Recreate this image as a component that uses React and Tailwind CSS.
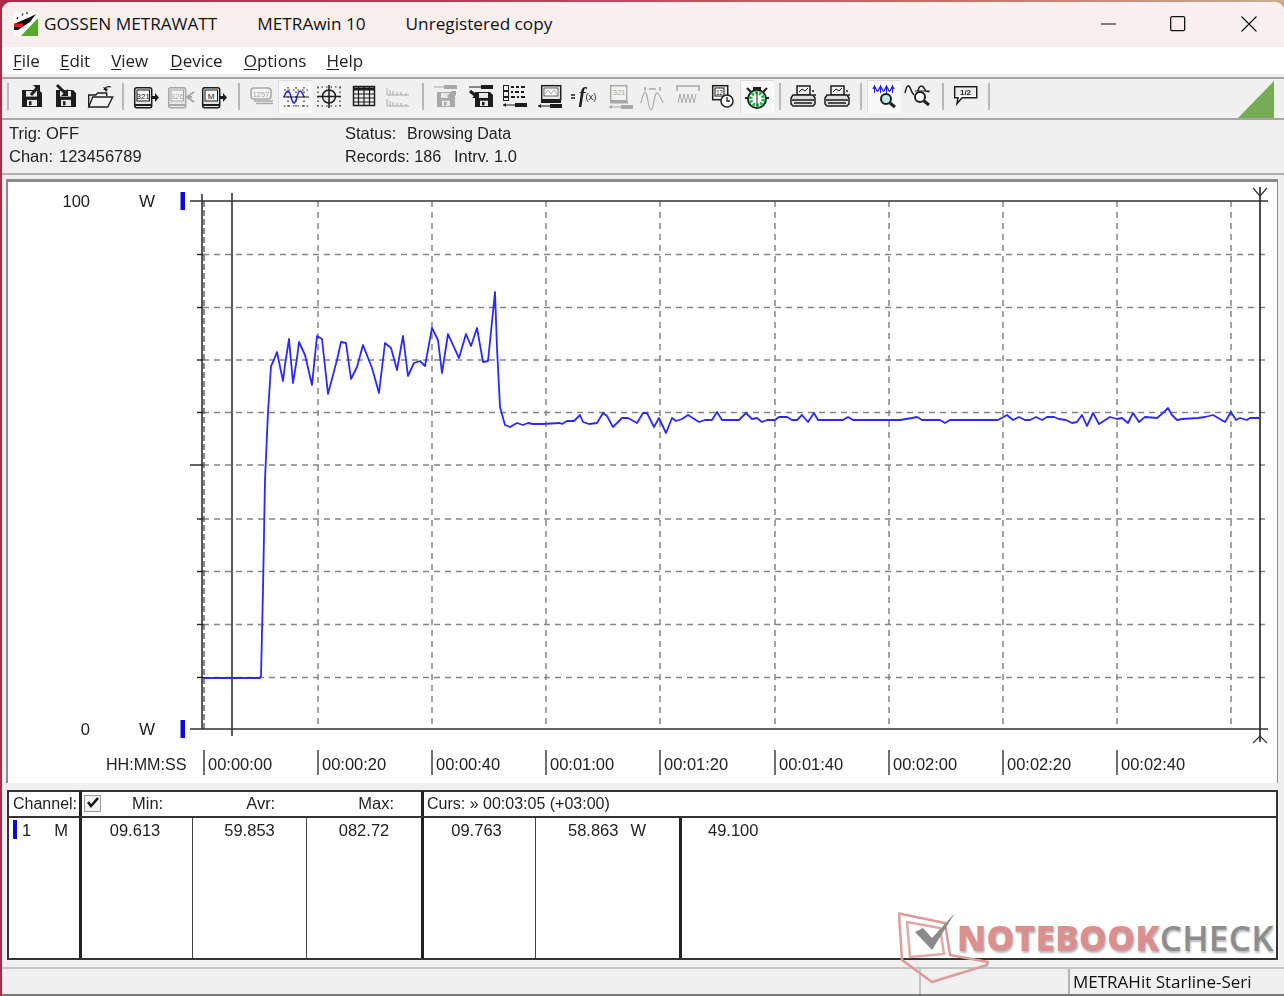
import React from "react";

const K = "#1d1d1d";
const G = "#a8a8a8";
const B = "#1f1fe8";

const Floppy = ({ x, y, w = 20, h = 17, c = K }) => (
  <g>
    <path d={`M${x} ${y}h${w - 3}l3 3v${h - 3}h-${w}z`} fill={c} />
    <rect x={x + 4} y={y + 1} width={w - 9} height={h * 0.33} fill="#e8e8e8" />
    <rect x={x + 5} y={y + h * 0.58} width={w - 10} height={h * 0.42 - 1} fill="#e8e8e8" />
    <rect x={x + 7} y={y + h * 0.66} width={2.5} height={h * 0.3 - 1} fill={c} />
  </g>
);

const Meter = ({ c = K, label = "321", arrow = true, x = 3, gray = false }) => (
  <g>
    <rect x={x + 0.7} y="6.700" width="17" height="20" rx="2" fill="#e6e6e6" stroke={c} strokeWidth="1.500" />
    <rect x={x + 3} y="9" width="12.500" height="11" fill="#f4f4f4" stroke={c} strokeWidth="1" />
    <text x={x + 9.2} y="18" fontSize="8" textAnchor="middle" fontFamily="Liberation Sans, sans-serif" fill={c}>{label}</text>
    <path d={`M${x + 1} 24h16`} stroke={c} strokeWidth="2" />
    {arrow && <path d={`M${x + 18} 15h3v-3l4 4.500-4 4.500v-3h-3z`} fill={c} />}
    {gray && <path d={`M${x + 26} 11l-7 5 7 5M${x + 20} 16h4`} stroke={c} strokeWidth="2" fill="none" />}
  </g>
);

const Probe = ({ y = 26, c = K, x = 3 }) => (
  <g>
    <path d={`M${x} ${y}h21`} stroke={c} strokeWidth="1" />
    <path d={`M${x} ${y}l3 -2v4z`} fill={c} />
    <rect x={x + 12} y={y - 2} width="12" height="4" fill={c} />
  </g>
);

const Lens = ({ x, y, fill = "#fff" }) => (
  <g>
    <circle cx={x} cy={y} r="5" fill={fill} stroke={K} strokeWidth="2" />
    <path d={`M${x + 4} ${y + 4}l5 4`} stroke={K} strokeWidth="3" />
  </g>
);

const Printer = () => (
  <g>
    <path d="M9 5h13v9H9z" fill="#eee" stroke={K} strokeWidth="1.500" />
    <path d="M11 11l3-3 3 2 3-3" fill="none" stroke={K} strokeWidth="1" />
    <path d="M5 14h20l2 3v6l-2 2H5l-2-2v-6z" fill="#ddd" stroke={K} strokeWidth="1.500" />
    <path d="M4 19h22M6 22h18" stroke={K} strokeWidth="1.300" />
    <circle cx="25" cy="10" r="1" fill={K} />
    <circle cx="27" cy="14" r="1" fill={K} />
  </g>
);

const icons = [
  <g key="a"><Floppy x={6} y={9} /><path d="M15 14l7-8" stroke={K} strokeWidth="3" /><path d="M17 4h7v7z" fill={K} /></g>,
  <g key="b"><Floppy x={6} y={9} /><path d="M7 4l8 8" stroke={K} strokeWidth="3" /><path d="M18 8v7h-7z" fill={K} /></g>,
  <g key="c"><path d="M4.700 26V14h7l2-2h9v3" fill="#eee" stroke={K} strokeWidth="1.400" /><path d="M4.700 26l4-10h20l-5 10z" fill="#f4f4f4" stroke={K} strokeWidth="1.400" /><path d="M20 9c1-3 4-4 7-3" fill="none" stroke={K} strokeWidth="1.300" /><path d="M19 6l3 5 2-3z" fill={K} /></g>,
  <Meter key="d" />,
  <Meter key="e" c={G} label="326" arrow={false} gray />,
  <Meter key="f" label="M" />,
  <g key="g"><rect x="5" y="7" width="20" height="11" rx="3" fill="#f2f2f2" stroke={G} strokeWidth="1.500" /><path d="M8 20h19M10 22.500h17" stroke={G} strokeWidth="1.500" /><text x="15" y="15.500" fontSize="7.500" textAnchor="middle" fontFamily="Liberation Sans, sans-serif" fill={G}>1257</text></g>,
  <g key="h"><path d="M3 8h24M3 24h24M7 5v22M15 5v22M23 5v22" stroke={K} strokeWidth="1.200" strokeDasharray="1.500 3" /><path d="M3 15c3-8 5-8 7 0s4 8 6 0 4-8 7 0" fill="none" stroke={B} strokeWidth="1.500" /><path d="M2 15h26" stroke={K} strokeWidth="1" /></g>,
  <g key="i"><path d="M3 6h24M3 25h24M4 6v19M26 6v19" stroke={K} strokeWidth="1.200" strokeDasharray="1.500 3" /><circle cx="15" cy="15.500" r="6.500" fill="none" stroke={K} strokeWidth="1.500" /><path d="M15 4v23M3 15.500h24" stroke={K} strokeWidth="1.500" /></g>,
  <g key="j"><rect x="5.500" y="5.500" width="21" height="19" fill="#eee" stroke={K} strokeWidth="1.500" /><path d="M5 8h22" stroke={K} strokeWidth="3" /><path d="M10.500 5v20M16 5v20M21.500 5v20M5 13h22M5 17h22M5 21h22" stroke={K} strokeWidth="1.200" /></g>,
  <g key="k"><path d="M5 7v7M8 9v5M11 10v4M15 11v3M19 11v3M24 12v2M5 18v7M8 20v5M11 21v4M15 22v3M19 22v3M24 23v2M5 14h22M5 25h22" stroke={G} strokeWidth="1" /></g>,
  <g key="l"><Floppy x={6} y={11} c={G} w={18} h={15} /><path d="M3 6h10" stroke={G} strokeWidth="1" /><rect x="13" y="4" width="13" height="4" fill={G} /><path d="M17 16l6-5" stroke={G} strokeWidth="3" /><path d="M20 10h5v5z" fill={G} /></g>,
  <g key="m"><Floppy x={9} y={11} w={18} h={15} /><path d="M3 6h12" stroke={K} strokeWidth="1" /><rect x="15" y="4" width="12" height="4" fill={K} /><path d="M4 10l6 5" stroke={K} strokeWidth="3" /><path d="M12 11v6H6z" fill={K} /></g>,
  <g key="n"><rect x="3.500" y="4.500" width="5" height="5" fill="#eee" stroke={K} /><rect x="3.500" y="10.500" width="5" height="5" fill="#eee" stroke={K} /><rect x="3.500" y="16.500" width="5" height="3" fill="#eee" stroke={K} /><path d="M11 6h3M16 6h3M21 6h4M11 11h2M15 11h4M21 11h3M11 16h4M17 16h2M21 16h4" stroke={K} strokeWidth="1.800" /><Probe y={24} /></g>,
  <g key="o"><rect x="6.700" y="4.700" width="19" height="14" fill="#eee" stroke={K} strokeWidth="1.500" /><rect x="9" y="7" width="14" height="8" fill="#fff" stroke={K} strokeWidth=".700" /><path d="M10 13l3-4 3 4 3-4 3 4" fill="none" stroke={G} /><rect x="6" y="19" width="20" height="3" fill={K} /><Probe y={25} /></g>,
  <g key="p"><text x="13" y="21" fontSize="20" textAnchor="middle" fontStyle="italic" fontWeight="700" fontFamily="Liberation Serif, serif" fill={K}>f</text><path d="M2 14h4M2 17h4" stroke={K} strokeWidth="1.500" /><text x="22" y="19" fontSize="9.500" textAnchor="middle" fontFamily="Liberation Sans, sans-serif" fill={K}>(x)</text></g>,
  <g key="q"><rect x="6.700" y="4.700" width="16" height="15" fill="#f2f2f2" stroke={G} strokeWidth="1.500" /><text x="15" y="14" fontSize="7.500" textAnchor="middle" fontFamily="Liberation Sans, sans-serif" fill={G}>321</text><rect x="6" y="20" width="18" height="2.500" fill={G} /><Probe y={26} c={G} x={5} /></g>,
  <g key="r"><path d="M7 6v4M22 6v4M11 8h7" stroke={G} strokeWidth="1.500" /><path d="M3 22c3-14 5-14 7-2s4 12 6 0 4-10 9 2" fill="none" stroke={G} strokeWidth="1.200" /></g>,
  <g key="s"><path d="M4 10V5h22v5" fill="none" stroke={G} strokeWidth="1.500" /><path d="M5 22l2-9 2 9 2-9 2 9 2-9 2 9 2-9 2 9 2-9" fill="none" stroke={G} strokeWidth="1" /></g>,
  <g key="t"><rect x="5.700" y="4.700" width="15" height="14" fill="#eee" stroke={K} strokeWidth="1.500" /><rect x="8" y="7" width="9" height="8" fill="#fff" stroke={K} /><text x="12.500" y="14" fontSize="6.500" textAnchor="middle" fontFamily="Liberation Sans, sans-serif" fill={K}>12</text><circle cx="20" cy="20" r="6" fill="#fff" stroke={K} strokeWidth="1.500" /><path d="M20 16v4h3" stroke={K} strokeWidth="1.300" fill="none" /></g>,
  <g key="u"><path d="M5 6l6 6M25 6l-6 6M3 16h5M22 16h5" stroke={K} strokeWidth="2" /><path d="M11 5h8v5h-8z" fill={K} /><circle cx="15" cy="17" r="9" fill="#fff" stroke={K} strokeWidth="2" /><circle cx="15" cy="17" r="6.500" fill="none" stroke="#27b84a" strokeWidth="4" strokeDasharray="2.500 1.500" /><path d="M15 10v14" stroke={K} strokeWidth="1" /></g>,
  <Printer key="v" />,
  <Printer key="w" />,
  <g key="x"><path d="M3 7c1-3 2-3 3 0s2 3 3 0 2-3 3 0 2 3 3 0 2-3 3 0 2 3 3 0 2-3 3 0" fill="none" stroke={B} strokeWidth="1.300" /><path d="M4.500 3v8M10.500 3v8M16.500 3v8M22.500 3v8" stroke={B} strokeWidth="1" /><Lens x={16} y={17} fill="#bfe8ee" /></g>,
  <g key="y"><path d="M2 12c2-9 4-9 6-3 1 3 2 4 3 5" fill="none" stroke={K} strokeWidth="1.500" /><path d="M15 10c1-6 4-6 6-3s1 4 5 4" fill="none" stroke={K} strokeWidth="1.500" /><path d="M12 10h15" stroke={K} /><Lens x={17} y={16} /></g>,
  <g key="z"><path d="M4.700 5.700h22v11H12l-5 6 1-6H4.700z" fill="#fff" stroke={K} strokeWidth="1.500" /><rect x="6" y="7" width="19" height="8" fill="#eee" /><text x="15.500" y="14" fontSize="8" fontWeight="700" textAnchor="middle" fontFamily="Liberation Sans, sans-serif" fill={K}>1/2</text></g>,
];

const Sep = ({ className = "" }) => <div className={`w-[2px] h-[27px] bg-[#b9b9b9] shrink-0 ${className}`} />;

const Tool = ({ i, pressed, wide }) => (
  <div className={`${wide ? "w-[34.500px]" : "w-[34px]"} h-[33px] shrink-0 flex items-center justify-center ${pressed ? "bg-[#f8f8f8] border-t border-l border-[#dcdcdc]" : ""}`}>
    <svg width="30" height="30" viewBox="0 0 30 30">{icons[i]}</svg>
  </div>
);

const Mnemonic = ({ first, rest, className }) => (
  <span className={className}><span className="underline underline-offset-2">{first}</span>{rest}</span>
);

const seg = [
  [203,678],[260,678],[261,676],[263,590],[265,480],[268,412],[270,382],[271,366],[273,362],[277,352],[283,381],[285,365],[289,339],[293,383],[297,358],[299,342],[305,355],[312,385],[317,336],[322,339],[328,394],[337,360],[341,342],[346,343],[351,379],[357,367],[363,345],[372,368],[379,393],[385,343],[391,348],[397,370],[403,336],[408,376],[414,363],[420,361],[425,366],[432,328],[438,340],[442,373],[448,334],[459,358],[466,334],[471,346],[477,328],[483,362],[488,361],[494,302],[495,292],[497,348],[499,387],[500,407],[505,425],[510,427],[517,423],[523,425],[528,423],[533,424],[542,424],[560,423],[562,424],[567,421],[574,421],[580,415],[583,422],[589,424],[597,423],[603,413],[607,416],[613,427],[622,418],[628,418],[637,423],[643,413],[647,413],[654,427],[659,418],[666,433],[672,418],[676,421],[682,419],[688,415],[699,422],[705,420],[712,420],[717,412],[722,420],[739,420],[746,413],[752,419],[757,418],[762,422],[767,420],[775,420],[779,417],[787,417],[792,420],[797,420],[802,415],[808,422],[814,413],[818,420],[843,420],[848,417],[853,420],[900,420],[912,418],[917,417],[922,420],[940,420],[945,423],[950,420],[998,420],[1007,415],[1013,420],[1019,417],[1025,420],[1030,420],[1036,417],[1042,420],[1047,417],[1054,417],[1059,419],[1066,420],[1072,423],[1077,422],[1082,415],[1087,426],[1093,413],[1099,424],[1110,417],[1117,419],[1122,418],[1128,423],[1133,413],[1139,422],[1145,417],[1157,418],[1163,413],[1168,408],[1172,415],[1177,420],[1182,419],[1198,418],[1205,417],[1213,415],[1225,422],[1231,412],[1236,420],[1240,418],[1247,420],[1250,418],[1260,418],
];

const hLines = [254.5, 307.5, 360, 412.5, 465, 519, 571.5, 624.5, 677.5];
const vLines = [318, 432, 546, 660, 775, 889, 1003, 1117, 1231];
const times = ["00:00:00","00:00:20","00:00:40","00:01:00","00:01:20","00:01:40","00:02:00","00:02:20","00:02:40"];
const labelFont = "Liberation Sans, Arial, sans-serif";

const Chart = () => (
  <svg className="block w-full h-full" viewBox="8 182 1269 601" fontFamily={labelFont} fontSize="16.500" fill="#222">
    {hLines.map((y) => <path key={y} d={`M203 ${y}H1268`} stroke="#858585" strokeWidth="1.500" strokeDasharray="6 5" />)}
    {hLines.map((y) => <path key={"t" + y} d={`M${y === 465 ? 190 : 197} ${y}H203`} stroke="#222" strokeWidth="1.400" />)}
    {vLines.map((x) => <path key={x} d={`M${x} 201V729`} stroke="#858585" strokeWidth="1.500" strokeDasharray="6 5" />)}
    <path d="M204 201V729" stroke="#555" strokeWidth="1.400" strokeDasharray="6 3" />
    <path d="M202 194V729" stroke="#222" strokeWidth="1.500" />
    <path d="M190 201H1268M190 729H1268" stroke="#333" strokeWidth="1.500" />
    <path d="M232 193V736" stroke="#333" strokeWidth="1.600" />
    <path d="M1260 187V742" stroke="#222" strokeWidth="1.600" />
    <path d="M1253 188L1260 196L1267 188M1253 743L1260 736L1267 743" fill="none" stroke="#333" strokeWidth="1.200" />
    <rect x="180.500" y="192" width="4.500" height="18" fill="#0a0adf" />
    <rect x="180.500" y="720" width="4.500" height="18" fill="#0a0adf" />
    <polyline points={seg.map((p) => p.join(",")).join(" ")} fill="none" stroke="#2a2aff" strokeWidth="1.800" strokeLinejoin="round" />
    <text x="90" y="207" textAnchor="end">100</text>
    <text x="139" y="207" fontSize="17">W</text>
    <text x="90" y="735" textAnchor="end">0</text>
    <text x="139" y="735" fontSize="17">W</text>
    <text x="106" y="770" fontSize="16.100">HH:MM:SS</text>
    {times.map((t, i) => (
      <g key={t}>
        <path d={`M${[204, 318, 432, 546, 660, 775, 889, 1003, 1117][i]} 750V775`} stroke="#333" strokeWidth="1.400" />
        <text x={[208, 322, 436, 550, 664, 779, 893, 1007, 1121][i]} y="770">{t}</text>
      </g>
    ))}
  </svg>
);

const Val = ({ w, children, border = "border-r border-[#444]", className = "" }) => (
  <div className={`${w} shrink-0 ${border} h-full text-center ${className}`}>{children}</div>
);

export default function App() {
  return (
    <div className="relative w-[1284px] h-[996px] overflow-hidden pl-[2px] pt-[2px] bg-[linear-gradient(90deg,#ad2b49,#b83a5a_35%,#c06a66_70%,#c8ae92)] font-['Liberation_Sans',Arial,sans-serif] text-[16.5px] text-[#222]">
      <div className="flex flex-col w-[1282px] h-[994px] bg-[#f0f0f0] rounded-t-[9px] overflow-hidden">
        <div className="h-[45px] shrink-0 bg-[#f8efee] flex items-center pl-[12px] pb-[1px] font-['Open_Sans',sans-serif] text-[17.200px] text-[#111]">
          <svg width="24" height="24" viewBox="0 0 24 24" className="shrink-0">
            <rect width="24" height="24" fill="#fff" />
            <path d="M24 6L7 24H24z" fill="#55aa2e" />
            <path d="M0 12L16 5l6-3-6 8L4 18H0z" fill="#111" />
            <rect x="0" y="11.500" width="9" height="3.500" fill="#e01a1a" />
            <path d="M3 7l1-2M8 3.500l1-2M13 2v-2" stroke="#111" strokeWidth="1.200" />
          </svg>
          <span className="ml-[6px]">GOSSEN METRAWATT</span>
          <span className="ml-[40px]">METRAwin 10</span>
          <span className="ml-[40px]">Unregistered copy</span>
          <div className="ml-auto flex items-center">
            <svg width="16" height="16" viewBox="0 0 16 16" className="mr-[53px]"><path d="M0 8h15" stroke="#111" strokeWidth="1" /></svg>
            <svg width="16" height="16" viewBox="0 0 16 16" className="mr-[55px]"><rect x=".700" y=".700" width="14" height="14" rx="1.500" fill="none" stroke="#111" strokeWidth="1.300" /></svg>
            <svg width="16" height="16" viewBox="0 0 16 16" className="mr-[27px]"><path d="M.5 .5l15 15M15.500 .5l-15 15" stroke="#111" strokeWidth="1.100" /></svg>
          </div>
        </div>

        <div className="h-[27px] shrink-0 bg-white flex items-center pl-[11px] font-['Open_Sans',sans-serif] text-[17px] text-[#222] blur-[0.3px]">
          <Mnemonic first="F" rest="ile" />
          <Mnemonic first="E" rest="dit" className="ml-[20px]" />
          <Mnemonic first="V" rest="iew" className="ml-[21px]" />
          <Mnemonic first="D" rest="evice" className="ml-[22px]" />
          <Mnemonic first="O" rest="ptions" className="ml-[21px]" />
          <Mnemonic first="H" rest="elp" className="ml-[20px]" />
        </div>

        <div className="h-[43px] shrink-0 mt-[3px] border-t-2 border-b-2 border-[#a6a6a6] flex items-center pl-[5px] pr-[10px] pb-[5px] blur-[0.3px]">
          <Sep className="mr-[5px]" />
          {[0, 1, 2].map((i) => <Tool key={i} i={i} />)}
          <Sep className="ml-[6px] mr-[5px]" />
          {[3, 4, 5].map((i) => <Tool key={i} i={i} />)}
          <Sep className="ml-[7px] mr-[4px]" />
          {[6, 7, 8, 9, 10].map((i) => <Tool key={i} i={i} pressed={i === 7} />)}
          <Sep className="ml-[8px] mr-[5px]" />
          {[11, 12, 13, 14, 15, 16, 17, 18, 19, 20].map((i) => <Tool key={i} i={i} pressed={i === 20} wide />)}
          <Sep className="mx-[5px]" />
          {[21, 22].map((i) => <Tool key={i} i={i} />)}
          <Sep className="ml-[6px] mr-[5px]" />
          {[23, 24].map((i) => <Tool key={i} i={i} pressed={i === 23} />)}
          <Sep className="ml-[7px] mr-[4px]" />
          <Tool i={25} />
          <Sep className="ml-[6px]" />
          <svg width="36" height="37" viewBox="0 0 36 37" className="ml-auto shrink-0 -mb-[5px] self-end"><path d="M36 0V37H0z" fill="#76ac55" /></svg>
        </div>

        <div className="h-[55px] shrink-0 border-b-2 border-[#b0b0b0] grid grid-cols-[336px_1fr] pl-[7px] pt-[2px] leading-[23px] blur-[0.3px]">
          <div>
            <div>Trig: OFF</div>
            <div className="flex"><span className="w-[50px]">Chan:</span><span>123456789</span></div>
          </div>
          <div>
            <div className="flex"><span className="w-[62px]">Status:</span><span className="text-[16px]">Browsing Data</span></div>
            <div className="flex"><span className="w-[109px] text-[16.200px]">Records: 186</span><span>Intrv. 1.0</span></div>
          </div>
        </div>

        <div className="h-[604px] mt-[4px] shrink-0 ml-[4px] w-[1272px] border-t-[3px] border-l-2 border-r border-[#8c8c8c] bg-white blur-[0.25px]">
          <Chart />
        </div>

        <div className="h-[170px] mt-[7px] shrink-0 ml-[5px] w-[1271px] border-2 border-[#333] bg-white flex flex-col blur-[0.25px]">
          <div className="h-[26px] shrink-0 border-b-2 border-[#333] flex items-center leading-none pb-[1px]">
            <div className="w-[73px] shrink-0 h-[25px] border-r-[3px] border-[#222] pl-[4px] flex items-center text-[16px]">Channel:</div>
            <div className="w-[342px] shrink-0 h-[25px] border-r-[3px] border-[#222] relative flex items-center">
              <svg width="18" height="18" viewBox="0 0 18 18" className="ml-[2px] shrink-0">
                <rect x=".5" y=".5" width="16" height="16" fill="#f4f4f4" stroke="#999" />
                <path d="M4 7l3 4 7-8" fill="none" stroke="#111" strokeWidth="2.500" />
              </svg>
              <span className="ml-[30px]">Min:</span>
              <span className="ml-[83px]">Avr:</span>
              <span className="ml-[83px]">Max:</span>
            </div>
            <div className="pl-[3px] flex items-center h-full text-[16px]">Curs: » 00:03:05 (+03:00)</div>
          </div>
          <div className="flex-1 flex leading-[24px]">
            <div className="w-[73px] shrink-0 h-full border-r-[3px] border-[#222] flex items-start">
              <span className="ml-[4px] mt-[2px] w-[4px] h-[19px] bg-[#0a0adf]" />
              <span className="ml-[5px]">1</span>
              <span className="ml-[23px]">M</span>
            </div>
            <Val w="w-[111px]" className="pr-[4px]">09.613</Val>
            <Val w="w-[114px]">59.853</Val>
            <Val w="w-[117px]" border="border-r-[3px] border-[#222]">082.72</Val>
            <Val w="w-[112px]" className="pr-[6px]">09.763</Val>
            <div className="w-[146px] shrink-0 h-full border-r-[3px] border-[#222] pl-[32px]"><span>58.863</span><span className="ml-[12px]">W</span></div>
            <div className="pl-[26px]">49.100</div>
          </div>
        </div>

        <div className="mt-[7px] flex-1 border-t-2 border-[#c4c4c4] flex border-b-2 border-b-[#777]">
          <div className="w-[919px] shrink-0 border-r-2 border-[#c4c4c4]" />
          <div className="w-[149px] shrink-0 border-r-2 border-[#b4b4b4]" />
          <div className="pl-[3px] font-['Open_Sans',sans-serif] text-[17px] leading-[25px] text-[#111] whitespace-nowrap blur-[0.3px]">METRAHit Starline-Seri</div>
        </div>
      </div>

      <div className="absolute left-[898px] top-[912px] w-[386px] h-[84px]">
        <svg width="120" height="84" viewBox="0 0 120 84" className="absolute left-0 top-0">
          <path d="M1 1.500L47 11L52 43L90 50L89 53L34 70L4 48Z" fill="none" stroke="#dd9c9c" strokeWidth="2.500" strokeLinejoin="round" />
          <path d="M9 10L42 16L46 42L12 45Z" fill="none" stroke="#e3a9a9" strokeWidth="2.500" strokeLinejoin="round" />
          <path d="M17 20L25 16L34 26L57 1L34 38Z" fill="#8a8a8a" />
        </svg>
        <div className="absolute left-[59px] top-[4px] flex items-baseline font-['Open_Sans',sans-serif] text-[35px] leading-[44px] tracking-[0.3px] whitespace-nowrap [text-shadow:1px_2px_2px_#bbb]">
          <span className="font-extrabold text-[#da9091]">NOTEBOOK</span>
          <span className="font-semibold text-[#8d8d8d]">CHECK</span>
        </div>
      </div>
    </div>
  );
}
